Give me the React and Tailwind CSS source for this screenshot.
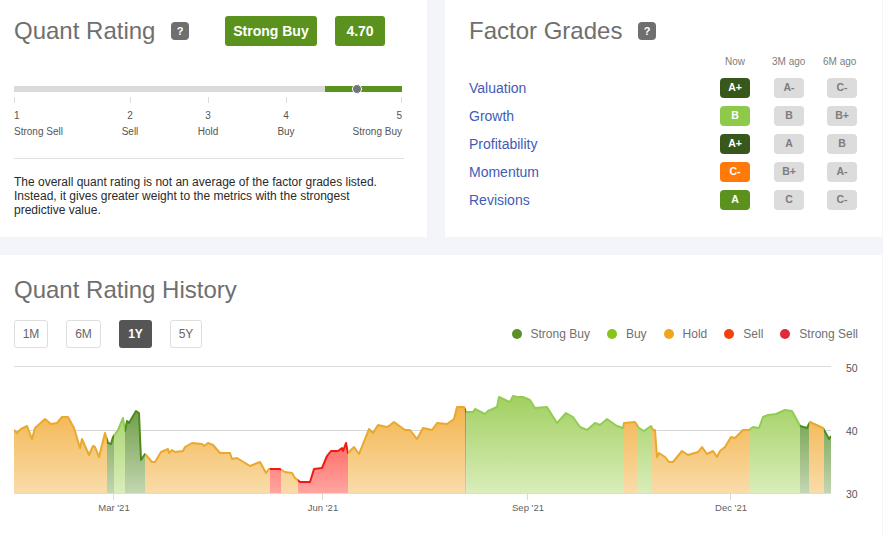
const pts = [[14,430],[17,433],[21,429],[27,426],[32,439],[35,428],[45,419],[51,424],[57,423],[62,417],[68,417],[74,428],[80,448],[82,439],[89,455],[93,446],[95,447],[99,457],[105,433],[108,443],[111,444],[113,437],[118,430],[123,418],[125,431],[127,421],[129,423],[136,411],[139,413],[141,460],[145,454],[152,462],[155,462],[161,452],[168,449],[169,453],[172,450],[175,452],[183,451],[185,447],[192,443],[202,444],[204,446],[208,443],[213,445],[220,453],[230,453],[232,459],[237,458],[250,466],[260,462],[266,473],[269,469],[280,469],[285,472],[292,473],[295,478],[300,482],[310,482],[314,469],[322,468],[327,456],[331,451],[338,451],[342,448],[343,451],[346,443],[348,453],[354,447],[359,454],[369,429],[373,433],[378,425],[387,427],[390,425],[394,422],[405,430],[410,430],[417,439],[423,428],[432,430],[437,423],[447,424],[454,419],[457,407],[464,407],[466,412],[473,412],[475,409],[485,414],[488,411],[497,407],[499,397],[510,402],[513,396],[517,397],[523,397],[530,400],[535,408],[547,407],[557,423],[566,413],[573,417],[580,427],[587,430],[595,423],[600,425],[607,419],[617,426],[623,428],[624,423],[635,422],[639,428],[644,431],[651,426],[653,430],[655,430],[657,457],[659,453],[665,457],[669,462],[673,462],[682,451],[688,455],[698,452],[702,447],[707,454],[713,451],[717,457],[720,451],[725,447],[731,437],[735,438],[743,430],[749,430],[753,427],[759,428],[763,417],[768,415],[776,414],[785,410],[792,411],[797,420],[800,426],[807,428],[810,422],[823,428],[829,439],[831,436]];
const linePath = "M" + pts.map((p) => p.join(",")).join("L");
const areaPath = linePath + "L831,493L14,493Z";
const segs = [[14,107,"h"],[107,114,"s"],[114,125,"b"],[125,145,"s"],[145,270,"h"],[270,281,"r"],[281,298,"h"],[298,348,"r"],[348,465,"h"],[465,466.5,"s"],[466.5,624,"b"],[624,637,"h"],[637,651,"b"],[651,749,"h"],[749,800,"b"],[800,809,"s"],[809,824,"h"],[824,831,"s"]];
const stroke = { h: "#e9a92e", s: "#4f8a1e", b: "#93cc55", r: "#f01c14" };

function Chart() {
  return (
    <svg width="883" height="281" viewBox="0 255 883 281" className="block" style={{ position: "absolute", left: 0, top: 0 }}>
      <defs>
        <linearGradient id="gh" gradientUnits="userSpaceOnUse" x1="0" y1="405" x2="0" y2="493"><stop offset="0" stopColor="#f3b44c" /><stop offset="1" stopColor="#f9dcaa" /></linearGradient>
        <linearGradient id="gs" gradientUnits="userSpaceOnUse" x1="0" y1="410" x2="0" y2="493"><stop offset="0" stopColor="#6f9f48" /><stop offset="1" stopColor="#c3d6b2" /></linearGradient>
        <linearGradient id="gb" gradientUnits="userSpaceOnUse" x1="0" y1="400" x2="0" y2="493"><stop offset="0" stopColor="#a3d164" /><stop offset="1" stopColor="#daedba" /></linearGradient>
        <linearGradient id="gr" gradientUnits="userSpaceOnUse" x1="0" y1="445" x2="0" y2="493"><stop offset="0" stopColor="#ff6f6a" /><stop offset="1" stopColor="#ffa5a0" /></linearGradient>
        <clipPath id="area"><path d={areaPath} /></clipPath>
        {segs.map(([a, b], i) => (
          <clipPath id={"seg" + i} key={i}><rect x={a} y="380" width={b - a} height="120" /></clipPath>
        ))}
      </defs>
      <line x1="14" x2="831" y1="366.5" y2="366.5" stroke="#dcdcdc" />
      <line x1="14" x2="831" y1="430.5" y2="430.5" stroke="#d6d6d6" />
      <line x1="14" x2="831" y1="493.5" y2="493.5" stroke="#dcdcdc" />
      {[113, 322, 527, 730].map((x) => (
        <line key={x} x1={x + 0.5} x2={x + 0.5} y1="493" y2="500" stroke="#d8d8d8" />
      ))}
      <g clipPath="url(#area)">
        {segs.map(([a, b, k], i) => (
          <rect key={i} x={a} y="380" width={b - a} height="113" fill={`url(#g${k})`} />
        ))}
      </g>
      {segs.map(([a, b, k], i) => (
        <path key={i} d={linePath} fill="none" stroke={stroke[k]} strokeWidth="2" strokeLinejoin="round" clipPath={`url(#seg${i})`} />
      ))}
      <g fontSize="10.5" fill="#555" fontFamily="'Liberation Sans', sans-serif">
        <text x="846" y="372">50</text>
        <text x="846" y="435">40</text>
        <text x="846" y="498">30</text>
      </g>
      <g fontSize="9.5" fill="#5f5f5f" textAnchor="middle" fontFamily="'Liberation Sans', sans-serif">
        <text x="114" y="511">Mar '21</text>
        <text x="323" y="511">Jun '21</text>
        <text x="528" y="511">Sep '21</text>
        <text x="731" y="511">Dec '21</text>
      </g>
    </svg>
  );
}

function Help() {
  return <span className="flex h-[18px] w-[18px] items-center justify-center rounded-[4px] bg-[#6f6f6f] text-[11px] font-bold leading-none text-white">?</span>;
}

const rows = [
  ["Valuation", "A+", "bg-[#38571a]", "A-", "C-"],
  ["Growth", "B", "bg-[#8fc94c]", "B", "B+"],
  ["Profitability", "A+", "bg-[#38571a]", "A", "B"],
  ["Momentum", "C-", "bg-[#ff7a0a]", "B+", "A-"],
  ["Revisions", "A", "bg-[#5a921d]", "C", "C-"],
];

function Gray({ t }) {
  return <span className="flex h-5 w-[30px] items-center justify-center rounded-[4px] bg-[#dcdcdc] text-[10.5px] font-bold text-[#7d7d7d]">{t}</span>;
}

const scale = [
  ["1", "Strong Sell", "left-0 items-start"],
  ["2", "Sell", "left-[116px] items-center -translate-x-1/2"],
  ["3", "Hold", "left-[194px] items-center -translate-x-1/2"],
  ["4", "Buy", "left-[272px] items-center -translate-x-1/2"],
  ["5", "Strong Buy", "right-0 items-end"],
];

export default function App() {
  return (
    <div className="relative h-[536px] w-[883px] overflow-hidden bg-[#f3f5fa] font-['Liberation_Sans',Arial,sans-serif]">
      <div className="flex h-[237px] gap-[18px]">
        <section className="w-[427px] bg-white pl-[14px] pr-[25px]">
          <div className="flex h-[46px] items-center pt-4">
            <h2 className="w-[157px] pb-[1px] text-[24px] leading-[30px] text-[#6f6f6f]">Quant Rating</h2>
            <Help />
            <span className="ml-9 flex h-[30px] w-[92px] items-center justify-center rounded-[3px] bg-[#5a921d] text-[14px] font-bold text-white">Strong Buy</span>
            <span className="ml-[18px] flex h-[30px] w-[50px] items-center justify-center rounded-[3px] bg-[#5a921d] text-[14px] font-bold text-white">4.70</span>
          </div>
          <div className="relative mt-10 h-[6px] bg-[#dadada]">
            <div className="absolute bottom-0 left-[311px] right-0 top-0 bg-[#5a921d]" />
            <div className="absolute left-[338px] top-[-2px] h-[10px] w-[10px] rounded-full border border-white bg-[#70757c]" />
          </div>
          <div className="relative h-[66px] text-[10px] text-[#555]">
            {[0, 116, 194, 272, 387].map((x) => (
              <span key={x} className="absolute top-[5px] h-[6px] w-px bg-[#dcdcdc]" style={{ left: x }} />
            ))}
            {scale.map(([n, l, c]) => (
              <div key={n} className={"absolute top-[18px] flex flex-col gap-[5px] leading-[11px] " + c}>
                <span>{n}</span>
                <span className="whitespace-nowrap">{l}</span>
              </div>
            ))}
          </div>
          <div className="h-px w-[390px] bg-[#e2e2e2]" />
          <p className="mt-4 w-[390px] text-[12px] leading-[14px] text-[#2a2a2a]">
            The overall quant rating is not an average of the factor grades listed. Instead, it gives greater weight to the metrics with the strongest predictive value.
          </p>
        </section>
        <section className="w-[437px] bg-white pl-6">
          <div className="flex h-[46px] items-center pt-4">
            <h2 className="w-[169px] pb-[1px] text-[24px] leading-[30px] text-[#6f6f6f]">Factor Grades</h2>
            <Help />
          </div>
          <div className="mt-2 flex h-[14px] items-center text-[10px] text-[#7d7d7d]">
            <span className="w-[251px]" />
            <span className="w-[30px] text-center">Now</span>
            <span className="ml-6 w-[30px] whitespace-nowrap">
              <span className="-ml-[2px]">3M ago</span>
            </span>
            <span className="ml-[23px] w-[30px] whitespace-nowrap">
              <span className="-ml-[4px]">6M ago</span>
            </span>
          </div>
          <div className="mt-[10px] flex flex-col gap-2">
            {rows.map(([name, now, bg, m3, m6]) => (
              <div key={name} className="flex h-5 items-center">
                <span className="w-[251px] text-[14px] text-[#3f5cb8]">{name}</span>
                <span className={"flex h-5 w-[30px] items-center justify-center rounded-[4px] text-[10.5px] font-bold text-white " + bg}>{now}</span>
                <span className="ml-6"><Gray t={m3} /></span>
                <span className="ml-[23px]"><Gray t={m6} /></span>
              </div>
            ))}
          </div>
        </section>
      </div>
      <section className="relative mt-[18px] h-[281px] w-[882px] bg-white">
        <Chart />
        <div className="relative px-[14px] pt-5">
          <h2 className="text-[24px] leading-[30px] text-[#6f6f6f]">Quant Rating History</h2>
          <div className="mt-[15px] flex h-7 items-center">
            <div className="flex gap-[18px] text-[12px] text-[#666]">
              <button className="h-7 w-[34px] rounded-[3px] border border-[#dedede] bg-white">1M</button>
              <button className="h-7 w-[35px] rounded-[3px] border border-[#dedede] bg-white">6M</button>
              <button className="h-7 w-[33px] rounded-[3px] bg-[#555] font-bold text-white">1Y</button>
              <button className="h-7 w-[32px] rounded-[3px] border border-[#dedede] bg-white">5Y</button>
            </div>
            <div className="ml-auto mr-[10px] flex items-center gap-[17px] text-[12px] text-[#707070]">
              {[["Strong Buy", "bg-[#5a8f2a]"], ["Buy", "bg-[#86c61a]"], ["Hold", "bg-[#f0a51e]"], ["Sell", "bg-[#f4410b]"], ["Strong Sell", "bg-[#df2a3e]"]].map(([t, c]) => (
                <span key={t} className="flex items-center gap-[9px]">
                  <span className={"h-[10px] w-[10px] rounded-full " + c} />
                  {t}
                </span>
              ))}
            </div>
          </div>
        </div>
      </section>
    </div>
  );
}
